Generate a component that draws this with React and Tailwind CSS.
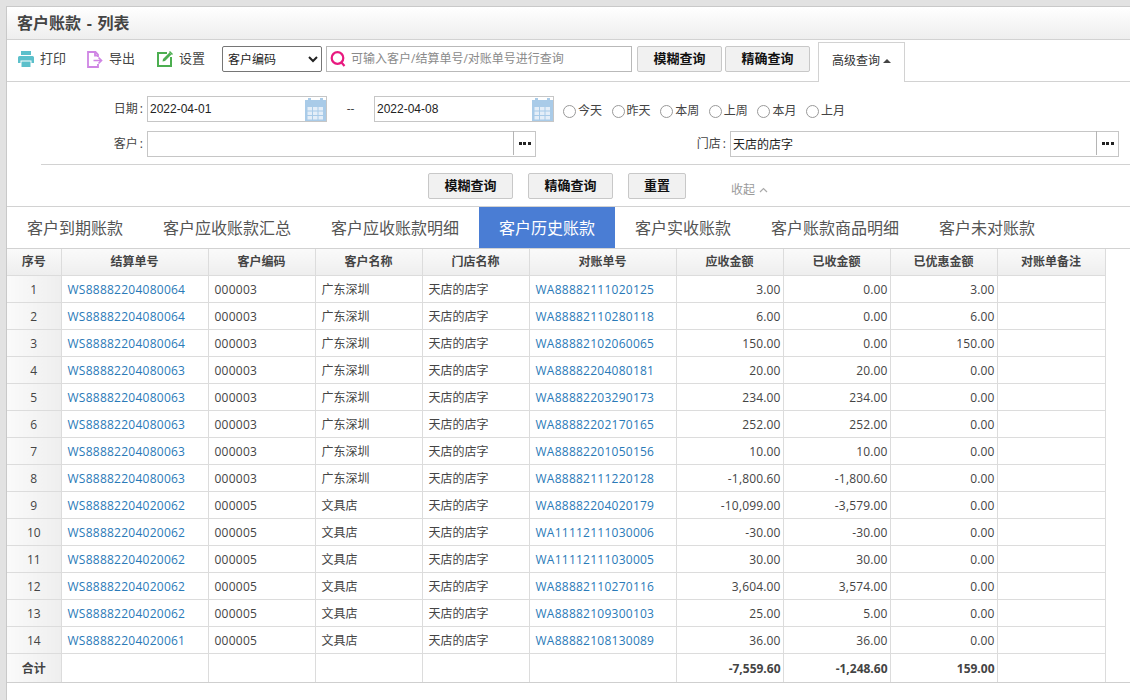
import React from "react";

const rows = [
  ["WS88882204080064","000003","广东深圳","WA88882111020125","3.00","0.00","3.00"],
  ["WS88882204080064","000003","广东深圳","WA88882110280118","6.00","0.00","6.00"],
  ["WS88882204080064","000003","广东深圳","WA88882102060065","150.00","0.00","150.00"],
  ["WS88882204080063","000003","广东深圳","WA88882204080181","20.00","20.00","0.00"],
  ["WS88882204080063","000003","广东深圳","WA88882203290173","234.00","234.00","0.00"],
  ["WS88882204080063","000003","广东深圳","WA88882202170165","252.00","252.00","0.00"],
  ["WS88882204080063","000003","广东深圳","WA88882201050156","10.00","10.00","0.00"],
  ["WS88882204080063","000003","广东深圳","WA88882111220128","-1,800.60","-1,800.60","0.00"],
  ["WS88882204020062","000005","文具店","WA88882204020179","-10,099.00","-3,579.00","0.00"],
  ["WS88882204020062","000005","文具店","WA11112111030006","-30.00","-30.00","0.00"],
  ["WS88882204020062","000005","文具店","WA11112111030005","30.00","30.00","0.00"],
  ["WS88882204020062","000005","文具店","WA88882110270116","3,604.00","3,574.00","0.00"],
  ["WS88882204020062","000005","文具店","WA88882109300103","25.00","5.00","0.00"],
  ["WS88882204020061","000005","文具店","WA88882108130089","36.00","36.00","0.00"],
];
const heads = ["序号","结算单号","客户编码","客户名称","门店名称","对账单号","应收金额","已收金额","已优惠金额","对账单备注"];
const widths = ["w-[54px]","w-[147px]","w-[107px]","w-[107px]","w-[107px]","w-[147px]","w-[107px]","w-[107px]","w-[107px]","w-[108px]"];
const tabs = ["客户到期账款","客户应收账款汇总","客户应收账款明细","客户历史账款","客户实收账款","客户账款商品明细","客户未对账款"];
const radios = ["今天","昨天","本周","上周","本月","上月"];

const Calendar = () => (
  <svg width="21" height="23" viewBox="0 0 21 23" className="shrink-0">
    <rect x="0" y="2" width="21" height="21" fill="#a9cbe8" />
    <rect x="3" y="0" width="3" height="4" fill="#a9cbe8" />
    <rect x="15" y="0" width="3" height="4" fill="#a9cbe8" />
    <g fill="#e4eef8">
      {[2.5, 8, 13.5].map((x) => [9, 13.5, 18].map((y) => <rect key={x + "-" + y} x={x} y={y} width="4.5" height="3.5" />))}
    </g>
  </svg>
);
const Dots = () => (
  <span className="flex h-full w-[22px] items-center justify-center gap-[1.5px] border-l border-[#b5b5b5] mt-[-1px] mb-[1px] shrink-0">
    <i className="block h-[3px] w-[3px] bg-[#222]" /><i className="block h-[3px] w-[3px] bg-[#222]" /><i className="block h-[3px] w-[3px] bg-[#222]" />
  </span>
);
const Btn = ({ children, className = "" }) => (
  <button className={"flex items-center justify-center rounded-[2px] border border-[#c8c8c8] bg-[#f1f1f1] text-[13px] font-bold text-[#111] " + className}>{children}</button>
);
const Label = ({ text, className = "" }) => (
  <span className={"pr-[4px] text-right " + className}>{text}<span className="ml-[2px]">:</span></span>
);

export default function App() {
  return (
    <div className="h-[700px] w-[1130px] overflow-hidden bg-[#e2e2e2] pl-[6px] pt-[6px] text-[12px] text-[#444]" style={{ fontFamily: '"Open Sans","Noto Sans CJK SC",sans-serif' }}>
      <div className="h-[694px] border-l border-t border-[#c9c9c9] bg-white">
        <div className="flex h-[33px] items-center border-b border-[#d2d2d2] bg-gradient-to-b from-white to-[#eeeeee] pl-[10px] text-[16px] font-bold text-[#444] [word-spacing:1.5px]">客户账款 - 列表</div>

        <div className="flex h-[42px] border-b border-[#d2d2d2] pl-[11px]">
          <div className="flex h-full items-center pb-[3px]">
            <span className="flex w-[69px] items-center gap-[6px] text-[13px]">
              <svg width="16" height="16" viewBox="0 0 16 16" fill="#5cc0cb"><path d="M3 0h10v4H3zM1.5 5h13A1.5 1.5 0 0 1 16 6.5V12h-2.5V9.500h-11V12H0V6.500A1.500 1.500 0 0 1 1.500 5z"/><path d="M3.500 10.500h9V16h-9z"/></svg>
              打印
            </span>
            <span className="flex w-[70px] items-center gap-[6px] text-[13px]">
              <svg width="16" height="17" viewBox="0 0 16 17" fill="none" stroke="#cf85e4" strokeWidth="1.800"><path d="M11 6V3.500L8.500 1H1v15h10v-3"/><path d="M8 1v3.500h3"/><path d="M6.500 9.500h8M11.500 6.500l3 3-3 3" strokeWidth="1.700"/></svg>
              导出
            </span>
            <span className="flex w-[65px] items-center gap-[6px] text-[13px]">
              <svg width="16" height="16" viewBox="0 0 16 16" fill="none"><path d="M10 2H1v13h13V6" stroke="#4cae50" strokeWidth="2"/><path d="M5.500 10.500 6 8l6.500-6.500 2 2L8 10z" fill="#4cae50"/><path d="M13 0l3 3-1 1-3-3z" fill="#4cae50"/></svg>
              设置
            </span>
            <select defaultValue="客户编码" className="h-[26px] w-[100px] rounded-[2px] border border-[#767676] bg-white pl-[1px] text-[12px] text-[#222]">
              <option>客户编码</option>
            </select>
            <div className="ml-[4px] flex h-[26px] w-[306px] items-center gap-[5px] border border-[#b9b9b9] pl-[3px]">
              <svg width="16" height="16" viewBox="0 0 16 16" fill="none" stroke="#e8197f" strokeWidth="2.200" className="shrink-0"><circle cx="7.500" cy="7" r="5.800"/><path d="M11.500 11.500 14.500 15"/></svg>
              <span className="text-[#8a8a8a]">可输入客户/结算单号/对账单号进行查询</span>
            </div>
            <Btn className="ml-[5px] h-[26px] w-[85px] mt-[-1px]">模糊查询</Btn>
            <Btn className="ml-[3px] h-[26px] w-[85px] mt-[-1px]">精确查询</Btn>
          </div>
          <div className="ml-[8px] mt-[2px] mb-[-1px] flex h-[40px] w-[87px] items-center justify-center gap-[3px] border-x border-t border-[#d2d2d2] bg-white pb-[3px] text-[#333]">
            高级查询
            <span className="mt-[-1px] h-0 w-0 border-x-[4px] border-b-[4px] border-x-transparent border-b-[#444]" />
          </div>
        </div>

        <div className="flex h-[125px] flex-col border-b border-[#d2d2d2]">
          <div className="mt-[14px] flex h-[26px] items-center">
            <Label text="日期" className="w-[140px]" />
            <div className="flex h-[26px] w-[180px] items-center justify-between border border-[#c6c6c6] pl-[2px] text-[#222]" style={{ fontFamily: '"Liberation Sans",sans-serif' }}>2022-04-01<Calendar /></div>
            <span className="w-[47px] text-center">--</span>
            <div className="flex h-[26px] w-[180px] items-center justify-between border border-[#c6c6c6] pl-[2px] text-[#222]" style={{ fontFamily: '"Liberation Sans",sans-serif' }}>2022-04-08<Calendar /></div>
            <div className="ml-[9px] flex pt-[4px]">
              {radios.map((r) => (
                <label key={r} className="flex w-[48.600px] items-center gap-[2px]">
                  <input type="radio" name="range" className="m-0 h-[13px] w-[13px] appearance-none rounded-full border border-[#999] bg-white" />{r}
                </label>
              ))}
            </div>
          </div>
          <div className="mt-[9px] flex h-[26px] items-center">
            <Label text="客户" className="w-[140px]" />
            <div className="flex h-[26px] w-[389px] justify-end border border-[#c6c6c6] items-center"><Dots /></div>
            <Label text="门店" className="ml-[154px] w-[40px]" />
            <div className="flex h-[26px] w-[389px] items-center justify-between border border-[#c6c6c6] pl-[2px] text-[#222]"><span className="pt-[1px]">天店的店字</span><Dots /></div>
          </div>
          <div className="ml-[34px] mt-[7px] border-t border-[#d2d2d2]" />
          <div className="mt-[8px] flex items-start">
            <Btn className="ml-[421px] h-[26px] w-[85px]">模糊查询</Btn>
            <Btn className="ml-[15px] h-[26px] w-[85px]">精确查询</Btn>
            <Btn className="ml-[15px] h-[26px] w-[58px]">重置</Btn>
            <span className="ml-[45px] mt-[8px] flex items-center gap-[4px] text-[#9a9a9a]">
              收起
              <svg width="9" height="6" viewBox="0 0 9 6" fill="none" stroke="#aaa" strokeWidth="1.200"><path d="M1 5l3.500-3.500L8 5"/></svg>
            </span>
          </div>
        </div>

        <div className="flex h-[42px] border-b border-[#d2d2d2]">
          {tabs.map((t) => (
            <div key={t} className={"flex h-[41px] items-center px-[20px] text-[16px] " + (t === "客户历史账款" ? "bg-[#4a7dd4] text-white" : "text-[#555]")}>{t}</div>
          ))}
        </div>

        <table className="table-fixed w-[1098px] border-collapse">
          <colgroup>{widths.map((w, i) => <col key={i} className={w} />)}</colgroup>
          <thead>
            <tr className="h-[26px]">
              {heads.map((h) => (
                <th key={h} className="border-r border-b border-[#dcdcdc] bg-gradient-to-b from-[#fafafa] to-[#eeeeee] p-0 text-center text-[12px] font-bold text-[#444]">{h}</th>
              ))}
            </tr>
          </thead>
          <tbody>
            {rows.map((r, i) => (
              <tr key={i} className="h-[27px]">
                <td className="border-r border-b border-[#dcdcdc] bg-gradient-to-r from-[#fafafa] to-[#eeeeee] pt-[2px] text-center">{i + 1}</td>
                <td className="border-r border-b border-[#dcdcdc] pl-[6px] pt-[2px] text-[#2a7ab8] tracking-[0.25px]">{r[0]}</td>
                <td className="border-r border-b border-[#dcdcdc] pl-[6px] pt-[2px] tracking-[0.25px]">{r[1]}</td>
                <td className="border-r border-b border-[#dcdcdc] pl-[6px] pt-[2px]">{r[2]}</td>
                <td className="border-r border-b border-[#dcdcdc] pl-[6px] pt-[2px]">天店的店字</td>
                <td className="border-r border-b border-[#dcdcdc] pl-[6px] pt-[2px] text-[#2a7ab8] tracking-[0.25px]">{r[3]}</td>
                <td className="border-r border-b border-[#dcdcdc] pr-[2px] pt-[2px] text-right tracking-[0.15px]">{r[4]}</td>
                <td className="border-r border-b border-[#dcdcdc] pr-[2px] pt-[2px] text-right tracking-[0.15px]">{r[5]}</td>
                <td className="border-r border-b border-[#dcdcdc] pr-[2px] pt-[2px] text-right tracking-[0.15px]">{r[6]}</td>
                <td className="border-r border-b border-[#dcdcdc] p-0" />
              </tr>
            ))}
            <tr className="h-[29px] font-bold">
              <td className="border-r border-b border-[#dcdcdc] bg-gradient-to-r from-[#fafafa] to-[#eeeeee] pt-[2px] text-center">合计</td>
              {[0, 1, 2, 3, 4].map((k) => <td key={k} className="border-r border-b border-[#dcdcdc] p-0" />)}
              {["-7,559.60", "-1,248.60", "159.00"].map((v) => <td key={v} className="border-r border-b border-[#dcdcdc] pr-[2px] pt-[2px] text-right">{v}</td>)}
              <td className="border-r border-b border-[#dcdcdc] p-0" />
            </tr>
          </tbody>
        </table>
        <div className="border-t border-[#cfcfcf] mt-[-1px]" />
      </div>
    </div>
  );
}
